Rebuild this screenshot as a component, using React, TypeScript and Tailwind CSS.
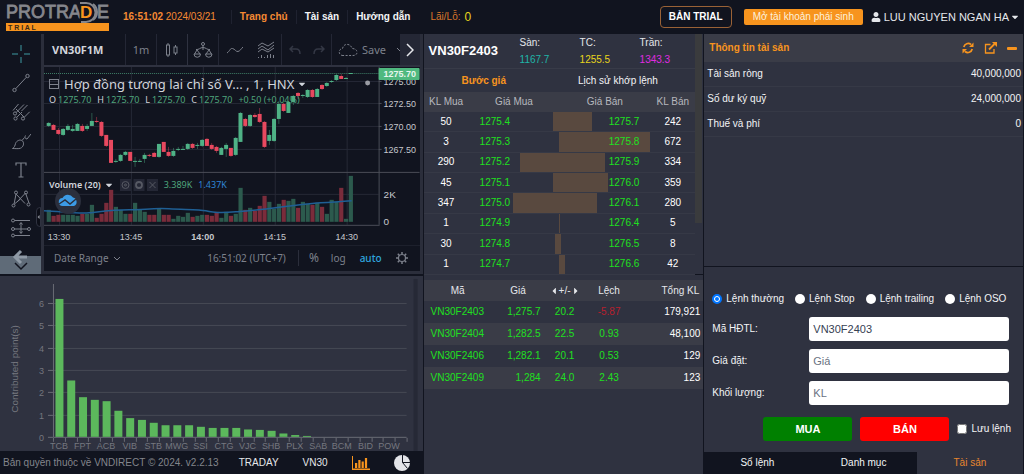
import type { FC, ReactNode } from 'react';
import { FaUser, FaCaretDown, FaCaretLeft, FaCaretRight } from 'react-icons/fa';

type Candle = [top: number, bottom: number, high: number, low: number, up: 0 | 1, volume: number];

const CANDLES: Candle[] = [
  [56, 59, 55, 60, 1, 12], [58, 63, 57, 63, 0, 6], [63, 67, 61, 68, 0, 7], [62, 68, 61, 69, 1, 7],
  [59, 63, 57, 64, 1, 7], [62, 64, 58, 65, 1, 7], [57, 64, 56, 64, 1, 6], [59, 64, 57, 65, 0, 8],
  [59, 62, 57, 64, 1, 8], [54, 59, 46, 59, 1, 17], [54, 55, 50, 56, 0, 4], [55, 69, 54, 70, 0, 8],
  [68, 79, 68, 80, 0, 19], [73, 96, 73, 96, 0, 32], [94, 95, 92, 96, 1, 15], [88, 94, 87, 95, 1, 12],
  [85, 88, 84, 89, 1, 8], [85, 94, 85, 94, 0, 8], [94, 95, 90, 100, 1, 19], [94, 95, 92, 95, 1, 12],
  [88, 92, 86, 96, 1, 10], [88, 89, 87, 90, 0, 7], [86, 90, 85, 90, 0, 7], [77, 90, 77, 91, 1, 13],
  [75, 85, 75, 85, 0, 7], [85, 89, 80, 90, 0, 7], [84, 89, 81, 90, 1, 3], [82, 83, 80, 84, 1, 6],
  [82, 83, 79, 83, 1, 5], [77, 82, 76, 83, 1, 9], [77, 81, 76, 82, 0, 5], [78, 79, 76, 82, 1, 6],
  [73, 79, 72, 80, 1, 7], [72, 79, 71, 79, 0, 7], [78, 82, 76, 83, 0, 6], [80, 84, 79, 86, 0, 10],
  [81, 88, 80, 88, 1, 4], [78, 82, 76, 90, 1, 10], [81, 89, 81, 90, 0, 6], [71, 88, 70, 89, 1, 8],
  [46, 75, 45, 75, 1, 34], [52, 59, 51, 60, 0, 12], [48, 59, 47, 60, 1, 14], [48, 50, 46, 51, 0, 11],
  [47, 55, 41, 56, 0, 16], [55, 80, 54, 81, 0, 26], [68, 74, 63, 78, 1, 20], [52, 74, 51, 75, 1, 13],
  [37, 52, 34, 57, 1, 18], [37, 44, 36, 45, 0, 22], [35, 46, 34, 46, 1, 21], [29, 35, 28, 38, 1, 23],
  [26, 29, 25, 32, 0, 14], [28, 29, 27, 31, 1, 20], [23, 30, 22, 31, 1, 18], [23, 30, 22, 31, 0, 17],
  [22, 30, 21, 30, 1, 19], [18, 22, 17, 23, 0, 15], [16, 19, 15, 20, 1, 8], [14, 15, 13, 16, 1, 22],
  [8, 13, 7, 14, 1, 20], [9, 12, 7, 12, 0, 34], [11, 12, 10, 12, 1, 3], [6, 7, 6, 7, 1, 46],
];

const TIMES = ['13:30', '13:45', '14:00', '14:15', '14:30'];

const PRICES = [
  { y: 15, label: '1275.00' },
  { y: 37, label: '1272.50' },
  { y: 60, label: '1270.00' },
  { y: 83, label: '1267.50' },
];

const DEPTH = [
  { bidVol: 50, bid: '1275.4', ask: '1275.7', askVol: 242 },
  { bidVol: 3, bid: '1275.3', ask: '1275.8', askVol: 672 },
  { bidVol: 290, bid: '1275.2', ask: '1275.9', askVol: 334 },
  { bidVol: 45, bid: '1275.1', ask: '1276.0', askVol: 359 },
  { bidVol: 347, bid: '1275.0', ask: '1276.1', askVol: 280 },
  { bidVol: 1, bid: '1274.9', ask: '1276.4', askVol: 5 },
  { bidVol: 30, bid: '1274.8', ask: '1276.5', askVol: 8 },
  { bidVol: 1, bid: '1274.7', ask: '1276.6', askVol: 42 },
];

const MAX_VOLUME = Math.max(...DEPTH.map((row) => Math.max(row.bidVol, row.askVol)));

const CONTRACTS = [
  { code: 'VN30F2403', price: '1,275.7', change: '20.2', basis: '-5.87', total: '179,921' },
  { code: 'VN30F2404', price: '1,282.5', change: '22.5', basis: '0.93', total: '48,100' },
  { code: 'VN30F2406', price: '1,282.1', change: '20.1', basis: '0.53', total: '129' },
  { code: 'VN30F2409', price: '1,284', change: '24.0', basis: '2.43', total: '123' },
];

const POINTS = [
  6.19, 2.53, 1.78, 1.66, 1.6, 1.17, 0.84, 0.76, 0.63, 0.52, 0.52, 0.52, 0.45, 0.4, 0.4, 0.4, 0.33, 0.31, 0.27, 0.15,
  0.08, 0.04,
];

const TICKERS = [
  'TCB', 'FPT', 'ACB', 'VIB', 'STB', 'MWG', 'SSI', 'CTG', 'VJC', 'SHB', 'PLX', 'SAB', 'BCM', 'BID', 'POW',
];

const ASSETS = [
  { label: 'Tài sản ròng', value: '40,000,000' },
  { label: 'Số dư ký quỹ', value: '24,000,000' },
  { label: 'Thuế và phí', value: '0' },
];

const ORDER_TYPES = ['Lệnh thường', 'Lệnh Stop', 'Lệnh trailing', 'Lệnh OSO'];

const Logo: FC = () => (
  <svg viewBox="0 0 104 28" className="h-7 w-[104px] overflow-visible" fontFamily="Liberation Sans, Arial, sans-serif">
    <g fill="#85868c" stroke="#85868c" strokeWidth="0.8" fontSize="18">
      <text x="0" y="15">PROTRA</text>
      <text x="91" y="15">E</text>
    </g>
    <path d="M74 0h6a9.500 9.500 0 0 1 0 19h-5" fill="none" stroke="#85868c" strokeWidth="2" />
    <path d="M87 1a10 10 0 0 1 0 16" fill="none" stroke="#85868c" strokeWidth="2" />
    <text x="74" y="15" fontSize="17" fontWeight="700" fill="#f7941e" stroke="#11141f" strokeWidth="3" paintOrder="stroke">D</text>
    <rect x="0" y="20" width="103" height="8" fill="#f7941e" />
    <text x="2" y="27" fontSize="7" fontWeight="700" fill="#3a2a18">T R I A L</text>
  </svg>
);

const Header: FC = () => (
  <header className="flex h-[34px] items-center pr-1 pl-1.5 whitespace-nowrap">
    <Logo />
    <p className="ml-[13px] text-[#f58a33]">
      <span className="font-bold">16:51:02</span> 2024/03/21
    </p>
    <nav className="ml-[15px] flex items-center font-bold text-gray-100">
      <a href="#home" className="border-l border-[#1f2230] px-2 text-[#f58a33]">Trang chủ</a>
      <a href="#assets" className="border-l border-[#1f2230] px-2">Tài sản</a>
      <a href="#guide" className="border-l border-[#1f2230] px-2">Hướng dẫn</a>
    </nav>
    <p className="ml-3 flex items-center gap-1 text-[#d9772b]">
      Lãi/Lỗ: <span className="text-xs text-[#e8d51c]">0</span>
    </p>
    <button type="button" className="ml-auto h-[22px] rounded-[4px] border border-[#9a6236] px-2 font-bold text-white">
      BẢN TRIAL
    </button>
    <button type="button" className="ml-3 h-4 rounded-[2px] bg-[#f7941e] px-[9px] text-[#fdf1dd]">
      Mở tài khoản phái sinh
    </button>
    <button type="button" className="ml-2 flex items-center text-[11px] text-gray-200">
      <FaUser className="mr-[3px] size-[10px]" />
      LUU NGUYEN NGAN HA
      <FaCaretDown className="ml-px size-[10px]" />
    </button>
  </header>
);

const ToolIcon: FC<{ children: ReactNode; label: string; active?: boolean }> = ({ children, label, active }) => (
  <button type="button" aria-label={label} className="flex h-[29px] w-full items-center justify-center">
    <svg
      viewBox="0 0 20 20"
      className={`size-5 ${active ? 'text-[#3f9aa3]' : 'text-[#7d818c]'}`}
      fill="none"
      stroke="currentColor"
      strokeWidth="1"
    >
      {children}
    </svg>
  </button>
);

const DrawingTools: FC = () => (
  <aside className="relative flex w-[41px] shrink-0 flex-col bg-[#11141f] pt-[5px]">
    <ToolIcon label="Cross" active>
      <path d="M10 1v6M10 13v6M1 10h6M13 10h6" />
    </ToolIcon>
    <ToolIcon label="Trend line">
      <circle cx="3.5" cy="17" r="1.7" />
      <circle cx="16.5" cy="3" r="1.7" />
      <path d="M4.7 15.7 15.3 4.3" />
    </ToolIcon>
    <ToolIcon label="Pitchfork">
      <path d="M2 8.500 7.500 2M5.200 10.500 13 2.500M5 7l8 8M5.800 15.300l5.200-5.300M13.200 15.300l5.500-5.500M10.500 9l6-6" />
      <circle cx="4" cy="11.500" r="1.600" />
      <circle cx="4.500" cy="16.500" r="1.600" />
      <circle cx="12" cy="16.500" r="1.600" />
    </ToolIcon>
    <ToolIcon label="Brush">
      <path d="M1.500 17.500c2-1 2.500-3 3-5 1-3 5-4.500 7-2.500s1 6-2 7.200c-2 .8-5 .3-8 .3zM11 9.500l2.500-3M14.500 4.500c-1 1.500-.5 3.500 1.500 3.500l4-5" />
    </ToolIcon>
    <ToolIcon label="Text">
      <path d="M5 5.500V3h10v2.500M10 3v14M7.500 17h5" strokeWidth="1.200" />
    </ToolIcon>
    <ToolIcon label="Pattern">
      <path d="M3 15.500 5 5l9 9.500M6 13l8.500-9L18 14M4 14.500 9.500 10" />
      <circle cx="2.500" cy="16.500" r="1.500" />
      <circle cx="5" cy="3.500" r="1.500" />
      <circle cx="15" cy="3.500" r="1.500" />
      <circle cx="17.500" cy="15.500" r="1.500" />
    </ToolIcon>
    <ToolIcon label="Prediction">
      <path d="M3.500 2.500H19M3.500 17.500H19M3 11h14M10 5v10M8.500 6.500 10 4.500l1.500 2M8.500 13.500l1.500 2 1.500-2" />
      <circle cx="2" cy="2.500" r="1.500" />
      <circle cx="2" cy="11" r="1.500" />
      <circle cx="18" cy="11" r="1.500" />
      <circle cx="2" cy="17.500" r="1.500" />
    </ToolIcon>
    <button type="button" aria-label="More tools" className="mt-auto flex h-[18px] items-center justify-center bg-[#5f6b78]">
      <svg viewBox="0 0 16 18" className="h-[18px] w-4 overflow-visible" fill="none">
        <path d="M2 1h12M8-5 2 1l6 6" stroke="#8f9aa6" strokeWidth="3" />
        <path d="m2 7 6 6 6-6" stroke="#11141f" strokeWidth="1.500" />
      </svg>
    </button>
    {/* collapse handle */}
    <div className="absolute top-[173px] right-0 flex h-5 w-[5px] items-center rounded-l-[4px] border border-[#2f3240] bg-[#0c0e17] text-[#8a8d96]">
      <FaCaretLeft className="size-[6px]" />
    </div>
  </aside>
);

const ChartToolbar: FC = () => (
  <div className="flex h-[33px] items-stretch border-b-2 border-[#2f3240] font-[Noto_Sans,sans-serif] text-[#7d818c]">
    <button type="button" className="w-[81px] shrink-0 pl-2 text-left text-[11px] font-bold text-gray-300">VN30F1M</button>
    <button type="button" className="w-[31px] border-l border-[#242735] text-[11px]">1m</button>
    <button type="button" aria-label="Candles" className="flex w-[31px] items-center justify-center border-l border-[#242735]">
      <svg viewBox="0 0 14 16" className="h-4 w-3.5" fill="none" stroke="currentColor">
        <rect x="1.500" y="3" width="3" height="10" />
        <path d="M3 1v2M3 13v2M10.500 3v2M10.500 11v2" />
        <rect x="9" y="5" width="3" height="6" />
      </svg>
    </button>
    <button type="button" aria-label="Compare" className="flex w-[31px] items-center justify-center border-l border-[#2f3240]">
      <svg viewBox="0 0 20 18" className="h-[18px] w-5" fill="none" stroke="currentColor">
        <circle cx="10" cy="3" r="1.500" />
        <path d="M10 4.500V9M3 8.500C6 9 7 6.500 10 6.500S14 9 17 8.500M4 9l-2.500 4M4 9l3 4M16 9l-3 4M16 9l2.500 4" />
        <path d="M1 13h6.500a3.200 3.200 0 0 1-6.500 0zM12.500 13H19a3.200 3.200 0 0 1-6.500 0z" />
      </svg>
    </button>
    <button type="button" aria-label="Line" className="flex w-8 items-center justify-center border-l border-[#242735]">
      <svg viewBox="0 0 16 8" className="h-2 w-4" fill="none" stroke="currentColor">
        <path d="M0 7c3-2 3-5 5.500-4.500S9 6 11 5.500 14 3 16 1" />
      </svg>
    </button>
    <button type="button" aria-label="Indicators" className="flex w-[31px] items-center justify-center">
      <svg viewBox="0 0 18 18" className="size-[18px]" fill="none" stroke="currentColor">
        <path d="m1 5 4-3 6 3 6-4M1 8l4-3 6 4 6-5M1 11l4-3 6 3 6-4" />
        <path d="M1.500 17v-1M4.500 17v-3M7.500 17v-1M10.500 17v-3M13.500 17v-4M16.500 17v-3" />
      </svg>
    </button>
    <div className="flex w-[51px] items-center justify-center gap-3 border-x border-[#242735] text-[#343845]">
      <button type="button" aria-label="Undo">
        <svg viewBox="0 0 12 10" className="h-2.5 w-3" fill="none" stroke="currentColor" strokeWidth="1.500">
          <path d="M4 1 1 4l3 3M1 4h6c3 0 4 2 4 5" />
        </svg>
      </button>
      <button type="button" aria-label="Redo">
        <svg viewBox="0 0 12 10" className="h-2.5 w-3" fill="none" stroke="currentColor" strokeWidth="1.500">
          <path d="m8 1 3 3-3 3M11 4H5C2 4 1 6 1 9" />
        </svg>
      </button>
    </div>
    <button type="button" className="flex min-w-0 flex-1 items-center gap-1 overflow-hidden pl-1.5 text-[11px]">
      <svg viewBox="0 0 20 16" className="h-4 w-5 shrink-0" fill="none" stroke="currentColor" strokeDasharray="2 1.500">
        <path d="M5 13.500a3.500 3.500 0 0 1-.5-7C5 3.500 7.500 2 10 2.500s3.500 2 4 4c3 0 5 1.500 5 3.800s-2 3.200-4 3.200z" />
      </svg>
      Save
      <svg viewBox="0 0 8 5" className="ml-1.5 h-[5px] w-2 shrink-0" fill="none" stroke="currentColor">
        <path d="m1 1 3 3 3-3" />
      </svg>
    </button>
    <button type="button" aria-label="Scroll right" className="flex w-5 shrink-0 items-center justify-center bg-[#242735] text-gray-200">
      <svg viewBox="0 0 8 14" className="h-3.5 w-2" fill="none" stroke="currentColor" strokeWidth="1.500">
        <path d="m1 1 6 6-6 6" />
      </svg>
    </button>
  </div>
);

const PriceChart: FC = () => (
  <svg viewBox="0 0 376 178" className="block w-full" fontFamily="Liberation Sans, Arial, sans-serif" fontSize="10">
    <g stroke="#262936">
      {TIMES.map((time, i) => (
        <path key={time} d={`M${15.5 + i * 72} 0V158`} />
      ))}
      {PRICES.map(({ y }) => (
        <path key={y} d={`M0 ${y - 0.5}H335`} />
      ))}
      <path d="M0 127.500H335" />
    </g>
    <path d="M0 6.500H335" stroke="#3f7f68" strokeDasharray="1 1" />
    {CANDLES.map(([top, bottom, high, low, up, volume], i) => {
      const x = 2.7 + i * 4.8;
      const color = up ? '#4fb286' : '#e8495f';
      return (
        <g key={i}>
          <rect x={x + 1.7} y={high} width="0.700" height={low - high} fill={color} opacity="0.600" />
          <rect x={x} y={top} width="4" height={bottom - top} fill={color} />
          <rect x={x} y={155 - volume} width="4.200" height={volume} fill={up ? '#2c5a4d' : '#7a2c3b'} />
        </g>
      );
    })}
    <path
      d="M0 144C20 145 35 147 45 146S70 143 85 143 110 141 125 142s30 0 37 2 20 2 30 1 25-2 40-4 30-4 45-5 20-1 31-2"
      fill="none"
      stroke="#1f5f94"
      strokeWidth="1.500"
    />
    <path d="M0 105.500H376" stroke="#4a4d57" />
    <path d="M335.500 0V158M0 158.500H336" stroke="#4a4d57" />
    <circle cx="324" cy="16" r="2.500" fill="#9a9ca3" />
    <g fill="#c6c8cd">
      {PRICES.map(({ y, label }) => (
        <g key={label}>
          <path d={`M335 ${y - 0.5}h3`} stroke="#4a4d57" />
          <text x="340" y={y + 3} fontSize="9">{label}</text>
        </g>
      ))}
      <text x="340" y="131">2K</text>
      <text x="340" y="158">0</text>
      {TIMES.map((time, i) => (
        <text key={time} x={15 + i * 72} y="173" textAnchor="middle" fontSize="9" fontWeight={time === '14:00' ? 700 : 400}>
          {time}
        </text>
      ))}
    </g>
    <rect x="335" y="1" width="41" height="12" rx="1" fill="#4fb97f" />
    <text x="340" y="10" fontSize="9" fontWeight="700" fill="#e7f6ee">1275.70</text>
  </svg>
);

const Quote: FC<{ label: string; value: string }> = ({ label, value }) => (
  <span className="flex gap-0.5">
    <span className="text-gray-300">{label}</span>
    <span className="text-[#4fa57c]">{value}</span>
  </span>
);

const ChartPanel: FC = () => (
  <section className="flex min-w-0 flex-1 flex-col border-x-3 border-b-3 border-[#2b2e3b] bg-[#11141f]">
    <ChartToolbar />
    <div className="relative font-[Noto_Sans,sans-serif]">
      <PriceChart />
      <div className="absolute top-[9px] left-[5px] whitespace-nowrap">
        <p className="flex h-4 items-center text-[13px] text-gray-300">
          <span className="mr-[5px] flex size-[10px] items-center justify-center border border-[#7d818c]">
            <span className="h-px w-full bg-[#7d818c]" />
          </span>
          Hợp đồng tương lai chỉ số V... , 1, HNX
          <FaCaretDown className="ml-[3px] size-[10px]" />
        </p>
        <p className="flex h-4 items-center gap-1.5 text-[9px]">
          <Quote label="O" value="1275.70" />
          <Quote label="H" value="1275.70" />
          <Quote label="L" value="1275.70" />
          <Quote label="C" value="1275.70" />
          <span className="text-[#4fa57c]">+0.50 (+0.04%)</span>
        </p>
      </div>
      <div className="absolute top-[110px] left-[5px] flex h-4 items-center text-[9px] whitespace-nowrap">
        <span className="font-semibold text-gray-300">Volume (20)</span>
        <FaCaretDown className="mr-1.5 ml-[3px] size-[10px] text-gray-300" />
        <svg viewBox="0 0 38 12" className="mr-1.5 h-3 w-[38px]" fill="none" stroke="#565963">
          <path d="M0 0h11v12H0zM13.500 0h11v12h-11zM27 0h11v12H27z" fill="#242735" stroke="none" />
          <circle cx="5.500" cy="6" r="3.500" />
          <circle cx="5.500" cy="6" r="1" />
          <circle cx="19" cy="6" r="3" strokeWidth="1.800" />
          <path d="m29.500 3 6 6M35.500 3l-6 6" />
        </svg>
        <span className="mr-1.5 text-[#4fa57c]">3.389K</span>
        <span className="text-[#2f86d6]">1.437K</span>
      </div>
      <svg viewBox="0 0 26 26" className="absolute top-[121px] left-[11px] size-[26px]">
        <circle cx="13" cy="13" r="13" fill="#2b2f3d" />
        <path d="M8 18a4 4 0 0 1-.5-8 6 6 0 0 1 10.500-.5 4.500 4.500 0 0 1 1 8.500z" fill="#3c9be6" />
        <path d="m4 16 6-4 5 4 6-5" fill="none" stroke="#2b2f3d" strokeWidth="1.500" />
      </svg>
    </div>
    <div className="flex flex-1 items-center border-t border-[#1d202c] pr-3 pl-2.5 font-[Noto_Sans,sans-serif] text-[10px] text-[#7d818c]">
      <button type="button" className="flex items-center gap-1">
        Date Range
        <svg viewBox="0 0 8 5" className="h-[5px] w-2" fill="none" stroke="currentColor">
          <path d="m1 1 3 3 3-3" />
        </svg>
      </button>
      <span className="ml-auto">16:51:02 (UTC+7)</span>
      <button type="button" className="ml-3 border-l border-[#2b2e3b] pl-2.5 text-xs">%</button>
      <button type="button" className="ml-3">log</button>
      <button type="button" className="ml-3.5 font-medium text-[#2fa4de]">auto</button>
      <button type="button" aria-label="Settings" className="ml-3.5">
        <svg viewBox="0 0 12 12" className="size-3" fill="none" stroke="currentColor">
          <circle cx="6" cy="6" r="3.500" strokeWidth="1.200" />
          <path d="M6 0v2M6 10v2M0 6h2M10 6h2M1.800 1.800l1.400 1.400M8.800 8.800l1.400 1.400M1.800 10.200l1.400-1.400M8.800 3.200l1.400-1.400" strokeWidth="1.500" />
        </svg>
      </button>
    </div>
  </section>
);

const PointsChart: FC = () => (
  <svg viewBox="0 0 423 175" className="block w-full" fontFamily="Liberation Sans, Arial, sans-serif" fill="#75777f">
    <path d="M53 27.500H407M53 49.500H407M53 72.500H407M53 94.500H407M53 116.500H407M53 139.500H407" stroke="#464954" />
    <path d="M53.500 8V161.500H407" fill="none" stroke="#6a6c75" />
    {[6, 5, 4, 3, 2, 1, 0].map((n) => (
      <g key={n}>
        <path d={`M48 ${161.5 - Math.round(n * 22.3)}h5`} stroke="#6a6c75" />
        <text x="44" y={165 - Math.round(n * 22.3)} fontSize="9" textAnchor="end">{n}</text>
      </g>
    ))}
    {Array.from({ length: 31 }, (_, i) => (
      <path key={i} d={`M${53.5 + Math.round(i * 11.8)} 162v4`} stroke="#6a6c75" />
    ))}
    {POINTS.map((value, i) => (
      <rect key={i} x={55.5 + i * 11.8} y={161 - value * 22.3} width="8" height={value * 22.3} fill="#5cb85c" />
    ))}
    {TICKERS.map((ticker, i) => (
      <text key={ticker} x={59 + i * 23.6} y="173" fontSize="9" textAnchor="middle">{ticker}</text>
    ))}
    <text transform="translate(18 93) rotate(-90)" fontSize="10" textAnchor="middle">Contributed point(s)</text>
    <rect x="414" y="3" width="4" height="172" fill="#262936" />
  </svg>
);

const LeftFooter: FC = () => (
  <footer className="flex h-[23px] items-center pr-[13px] pl-[3px] whitespace-nowrap text-gray-200">
    <small className="text-[10px] text-[#83858c]">Bản quyền thuộc về VNDIRECT © 2024. v2.2.13</small>
    <button type="button" className="ml-auto">TRADAY</button>
    <button type="button" className="ml-6">VN30</button>
    <button type="button" aria-label="Biểu đồ cột" className="ml-6 text-[#f7941e]">
      <svg viewBox="0 0 18 14" className="h-3.5 w-[18px]" fill="currentColor">
        <path d="M0 0h1v12.500h17V14H0zM3 7h2.200v5H3zM6.300 4h2.200v8H6.300zM9.600 5.500h2.200V12H9.600zM12.900 2h2.200v10h-2.200z" />
      </svg>
    </button>
    <button type="button" aria-label="Biểu đồ tròn" className="ml-6">
      <svg viewBox="0 0 16 16" className="size-4">
        <circle cx="8" cy="8" r="8" fill="#e3e4e8" />
        <path d="M8.500 0v7.500H16M8.500 7.500l5 6" fill="none" stroke="#11141f" />
      </svg>
    </button>
  </footer>
);

const Limit: FC<{ label: string; value: string; color: string }> = ({ label, value, color }) => (
  <div className="w-[60px]">
    <dt className="h-[17px] leading-[17px] text-gray-200">{label}</dt>
    <dd className={`h-[17px] leading-[17px] ${color}`}>{value}</dd>
  </div>
);

const OrderBook: FC = () => (
  <section className="flex h-[241px] border-b border-[#11141f]">
    <div className="min-w-0 flex-1">
      <div className="flex h-[34px] items-center pl-[5px]">
        <h2 className="w-[91px] shrink-0 text-[13px] font-bold text-white">VN30F2403</h2>
        <dl className="flex">
          <Limit label="Sàn:" value="1167.7" color="text-[#1fb5a8]" />
          <Limit label="TC:" value="1255.5" color="text-[#e8d51c]" />
          <Limit label="Trần:" value="1343.3" color="text-[#e02be0]" />
        </dl>
      </div>
      <div className="flex h-6 border-t border-[#383b48] pl-[38px]">
        <button type="button" className="mr-[72px] font-bold text-[#f7941e]">Bước giá</button>
        <button type="button" className="text-gray-100">Lịch sử khớp lệnh</button>
      </div>
      <table className="h-[183px] w-full table-fixed border-collapse text-center">
        <colgroup>
          <col className="w-[45px]" />
          <col />
          <col />
          <col className="w-[45px]" />
        </colgroup>
        <thead>
          <tr className="h-5 bg-[#3a3c47] text-[#b6b8be]">
            <th className="font-normal">KL Mua</th>
            <th className="font-normal">Giá Mua</th>
            <th className="font-normal">Giá Bán</th>
            <th className="font-normal">KL Bán</th>
          </tr>
        </thead>
        <tbody>
          {DEPTH.map((row) => (
            <tr key={row.bid} className="border-b border-[#363946]">
              <td className="text-white">{row.bidVol}</td>
              <td className="relative pl-[11px] text-left text-[#1fe01f]">
                <span
                  className="absolute inset-y-0 right-0 bg-[#59493f]"
                  style={{ width: `${(row.bidVol / MAX_VOLUME) * 100}%` }}
                />
                <span className="relative">{row.bid}</span>
              </td>
              <td className="relative pr-[11px] text-right text-[#1fe01f]">
                <span
                  className="absolute inset-y-0 left-0 bg-[#59493f]"
                  style={{ width: `${(row.askVol / MAX_VOLUME) * 100}%` }}
                />
                <span className="relative">{row.ask}</span>
              </td>
              <td className="text-white">{row.askVol}</td>
            </tr>
          ))}
        </tbody>
      </table>
    </div>
    <div className="mr-px h-[189px] w-[7px] bg-[#3a3b3d]" />
  </section>
);

const ContractTable: FC = () => (
  <table className="mt-[5px] w-full table-fixed text-[#1fe01f]">
    <colgroup>
      <col className="w-[68px]" />
      <col className="w-[49px]" />
      <col className="w-[48px]" />
      <col className="w-[41px]" />
      <col />
    </colgroup>
    <thead>
      <tr className="h-[21px] bg-[#3a3c47] text-gray-200">
        <th className="font-normal">Mã</th>
        <th className="pl-1 font-normal">Giá</th>
        <th className="font-normal">
          <span className="flex items-center justify-center">
            <FaCaretLeft className="size-2.5" />
            +/-
            <FaCaretRight className="size-2.5" />
          </span>
        </th>
        <th className="font-normal">Lệch</th>
        <th className="pr-1 text-right font-normal">Tổng KL</th>
      </tr>
    </thead>
    <tbody>
      {CONTRACTS.map((row) => (
        <tr key={row.code} className="h-[22px] even:bg-[#3a3c47]">
          <td className="pl-[7px]">{row.code}</td>
          <td className="text-right">{row.price}</td>
          <td className="text-center">{row.change}</td>
          <td className={`text-center ${row.basis.startsWith('-') ? 'text-[#b81f2e]' : ''}`}>{row.basis}</td>
          <td className="pr-[3px] text-right text-white">{row.total}</td>
        </tr>
      ))}
    </tbody>
  </table>
);

const AssetPanel: FC = () => (
  <section className="h-[233px] border-b border-[#11141f]">
    <div className="flex h-7 items-center bg-[#3a3c47] pr-1.5 pl-[5px] text-[#f7941e]">
      <h2 className="mr-auto font-bold">Thông tin tài sản</h2>
      <button type="button" aria-label="Làm mới" className="mr-2.5">
        <svg viewBox="0 0 12 12" className="size-3" fill="currentColor">
          <path d="M1.800 5A4.500 4.500 0 0 1 9 2.500" fill="none" stroke="currentColor" strokeWidth="1.700" />
          <path d="M10.200 7A4.500 4.500 0 0 1 3 9.500" fill="none" stroke="currentColor" strokeWidth="1.700" />
          <path d="M11.500.5V5H7zM.5 11.500V7H5z" />
        </svg>
      </button>
      <button type="button" aria-label="Mở rộng" className="mr-2.5">
        <svg viewBox="0 0 13 12" className="h-3 w-[13px]" fill="none" stroke="currentColor">
          <path d="M6.500 2.500H1.500v8.500h8.500V7" strokeWidth="1.300" />
          <path d="m5 7.500 5.500-5.500" strokeWidth="1.800" />
          <path d="M8 0h5v5z" fill="currentColor" stroke="none" />
        </svg>
      </button>
      <button type="button" aria-label="Thu gọn">
        <span className="block h-[3px] w-[10px] rounded-[1px] bg-[#f7941e]" />
      </button>
    </div>
    <dl className="text-gray-100">
      {ASSETS.map(({ label, value }) => (
        <div key={label} className="flex h-[25px] items-center justify-between border-b border-[#363946] pr-0.5 pl-[3px]">
          <dt>{label}</dt>
          <dd>{value}</dd>
        </div>
      ))}
    </dl>
  </section>
);

const Field: FC<{ id: string; label: string; value?: string; placeholder?: string }> = ({
  id,
  label,
  value,
  placeholder,
}) => (
  <>
    <label htmlFor={id}>{label}</label>
    <input
      id={id}
      type="text"
      defaultValue={value}
      placeholder={placeholder}
      className="h-6 w-full min-w-0 rounded-[3px] bg-white px-1 text-[11px] text-gray-700 placeholder:text-gray-500"
    />
  </>
);

const OrderForm: FC = () => (
  <form className="flex-1 pt-6 pr-3 pl-2 text-gray-100">
    <div className="flex h-4 gap-[11px] whitespace-nowrap">
      {ORDER_TYPES.map((type, i) => (
        <label key={type} className="flex items-center gap-1">
          <input
            type="radio"
            name="orderType"
            defaultChecked={i === 0}
            className="size-[10px] appearance-none rounded-full bg-white checked:border-2 checked:border-[#0075ff] checked:bg-[#0075ff] checked:shadow-[inset_0_0_0_1px_#fff]"
          />
          {type}
        </label>
      ))}
    </div>
    <div className="mt-[10px] grid grid-cols-[97px_1fr] items-center gap-y-2 pr-0.5">
      <Field id="code" label="Mã HĐTL:" value="VN30F2403" />
      <Field id="price" label="Giá đặt:" placeholder="Giá" />
      <Field id="quantity" label="Khối lượng:" placeholder="KL" />
    </div>
    <div className="mt-3 flex items-center justify-end whitespace-nowrap">
      <button type="button" className="mr-2 h-6 w-[89px] rounded-[3px] bg-[#008000] text-[11px] font-bold text-white">MUA</button>
      <button type="button" className="mr-2 h-6 w-[89px] rounded-[3px] bg-[#ff0000] text-[11px] font-bold text-white">BÁN</button>
      <label className="flex items-center gap-1">
        <input type="checkbox" className="size-[10px]" />
        Lưu lệnh
      </label>
    </div>
  </form>
);

const App: FC = () => (
  <div className="flex min-h-screen flex-col bg-[#11141f] font-[Liberation_Sans,Arial,sans-serif] text-[10px] leading-[14px]">
    <Header />
    <main className="grid flex-1 grid-cols-[423fr_280fr_319fr] gap-x-px pr-px">
      <div className="flex min-w-0 flex-col">
        <div className="flex h-[240px]">
          <DrawingTools />
          <ChartPanel />
        </div>
        <div className="mt-0.5 flex-1 bg-[#2f3240]">
          <PointsChart />
        </div>
        <LeftFooter />
      </div>
      <div className="min-w-0 bg-[#2f3240]">
        <OrderBook />
        <ContractTable />
      </div>
      <div className="flex min-w-0 flex-col bg-[#2f3240]">
        <AssetPanel />
        <OrderForm />
        <nav className="grid h-[22px] grid-cols-3 text-center leading-[22px] text-gray-100">
          <a href="#orders" className="bg-[#11141f]">Sổ lệnh</a>
          <a href="#portfolio" className="bg-[#11141f]">Danh mục</a>
          <a href="#summary" className="text-[#e8862e]">Tài sản</a>
        </nav>
      </div>
    </main>
  </div>
);

export default App;
